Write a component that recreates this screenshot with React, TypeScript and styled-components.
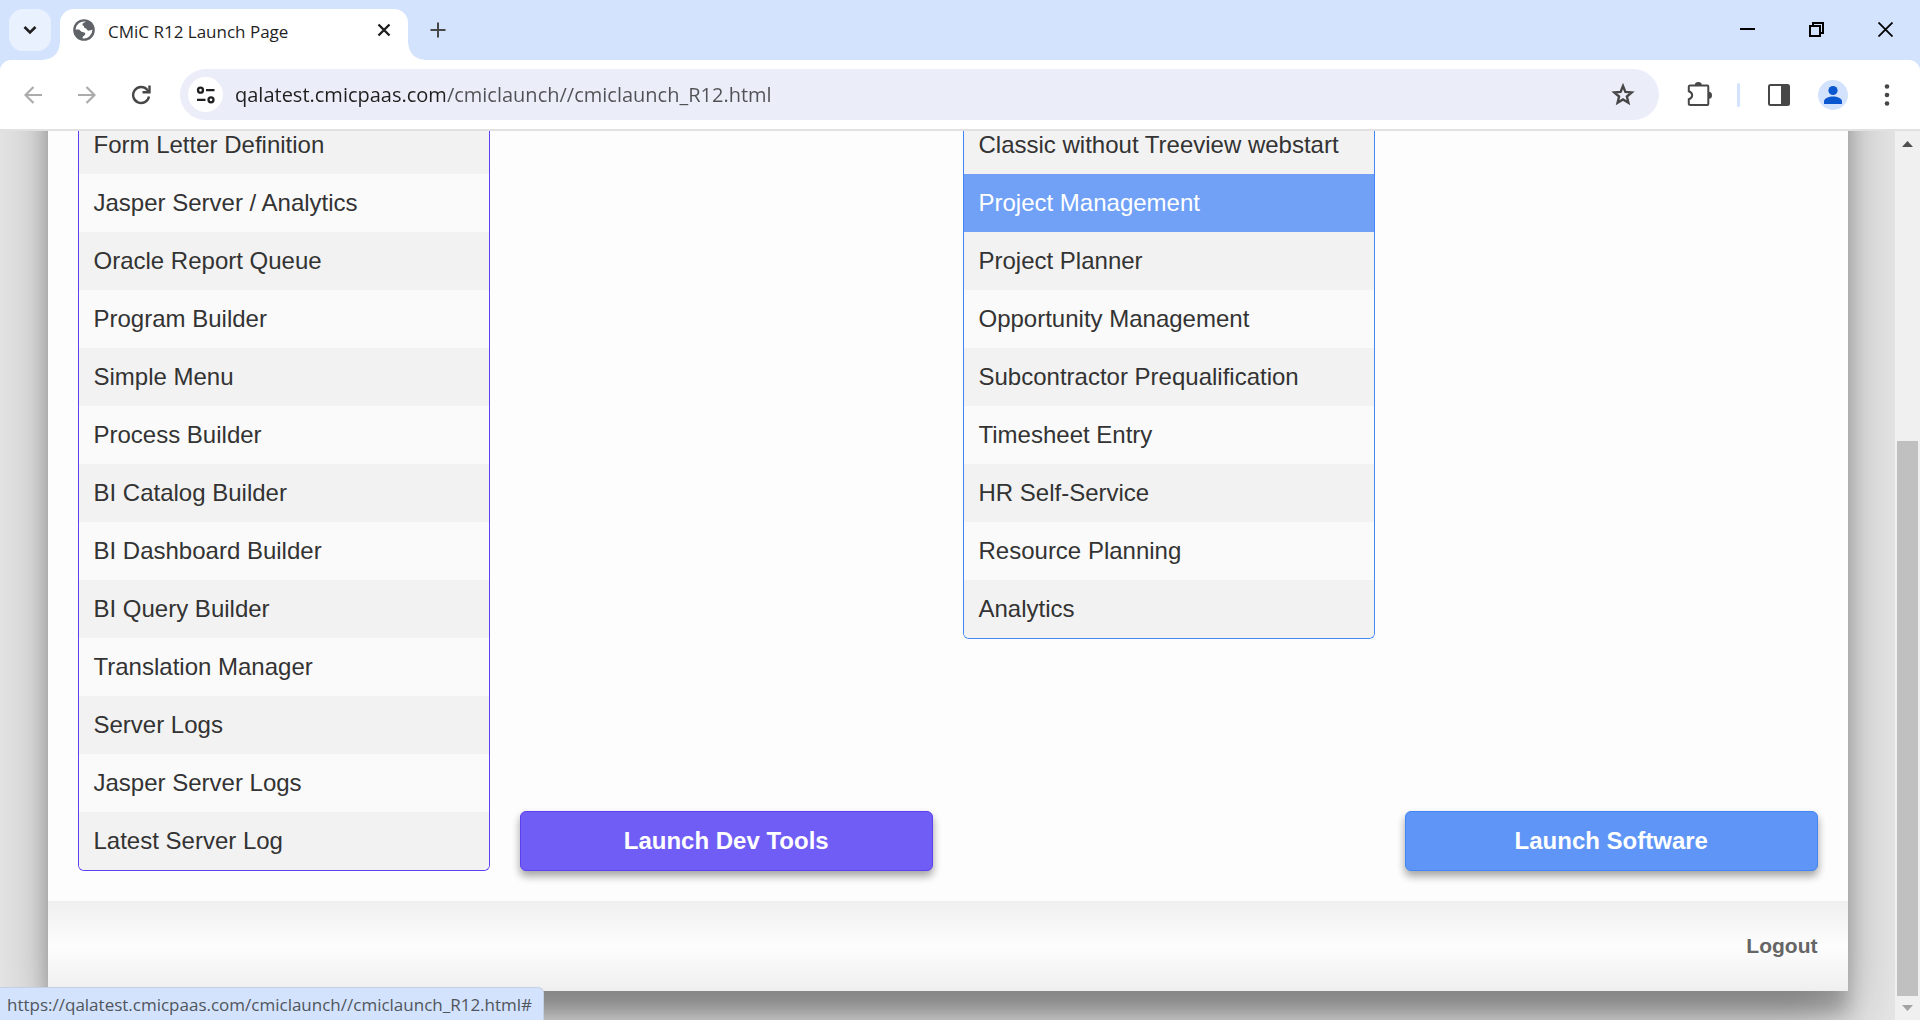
import React from "react";
import styled, { createGlobalStyle } from "styled-components";

const GlobalStyle = createGlobalStyle`
  *, *::before, *::after { box-sizing: border-box; }
  html, body { margin: 0; padding: 0; }
  body { overflow: hidden; }
  button { margin: 0; padding: 0; border: 0; background: none; cursor: pointer; }
`;

const uiFont = `"Segoe UI", "Open Sans", "Noto Sans", sans-serif`;
const pageFont = `Arial, "Liberation Sans", sans-serif`;

const Browser = styled.div`
  display: flex;
  flex-direction: column;
  height: 100vh;
  background: #d3e3fd;
  font-family: ${uiFont};
`;

/* ---------- tab strip ---------- */

const TabStrip = styled.header`
  display: flex;
  align-items: stretch;
  height: 60px;
  padding: 9px 0 0 9px;
  flex: none;
`;

const TabSearch = styled.button`
  display: grid;
  place-items: center;
  width: 42px;
  height: 42px;
  border-radius: 14px;
  background: #eaf1fe;
`;

const Tab = styled.div`
  position: relative;
  display: flex;
  align-items: center;
  width: 348px;
  margin-left: 9px;
  padding: 0 12px 9px 13px;
  border-radius: 14px 14px 0 0;
  background: #fff;

  &::before,
  &::after {
    content: "";
    position: absolute;
    bottom: 0;
    width: 16px;
    height: 16px;
  }
  &::before {
    right: 100%;
    background: radial-gradient(circle at 0 0, transparent 15px, #fff 16px);
  }
  &::after {
    left: 100%;
    background: radial-gradient(circle at 100% 0, transparent 15px, #fff 16px);
  }
`;

const TabTitle = styled.span`
  flex: 1;
  margin-left: 13px;
  padding-top: 4px;
  font-size: 17px;
  line-height: 24px;
  color: #1f1f1f;
  white-space: nowrap;
`;

const TabButton = styled.button`
  display: grid;
  place-items: center;
  width: 24px;
  height: 24px;
`;

const NewTab = styled.button`
  display: grid;
  place-items: center;
  width: 42px;
  height: 42px;
  margin-left: 9px;
`;

const WindowControls = styled.div`
  display: flex;
  margin: -9px 0 0 auto;
`;

const WindowButton = styled.button`
  display: grid;
  place-items: center;
  width: 69px;
  height: 58px;
`;

/* ---------- toolbar ---------- */

const Toolbar = styled.div`
  display: flex;
  align-items: center;
  flex: none;
  height: 71px;
  padding: 0 6px;
  border-bottom: 2px solid #e1e1e1;
  border-radius: 11px 11px 0 0;
  background: #fff;
`;

const ToolButton = styled.button`
  display: grid;
  place-items: center;
  flex: none;
  width: 54px;
  height: 51px;
`;

const Omnibox = styled.form`
  display: flex;
  align-items: center;
  flex: 1;
  height: 51px;
  margin-left: 12px;
  padding: 0 9px 0 8px;
  border-radius: 26px;
  background: #ebeef8;
`;

const SiteInfo = styled.button`
  display: grid;
  place-items: center;
  flex: none;
  width: 35px;
  height: 35px;
  border-radius: 50%;
  background: #fff;
`;

/* The host is darker than the path that follows it. */
const Address = styled.input`
  flex: 1;
  min-width: 0;
  height: 35px;
  margin-left: 12px;
  padding: 0;
  border: 0;
  outline: 0;
  font-family: ${uiFont};
  font-size: 20px;
  line-height: 35px;
  color: #1f1f1f;
  background: linear-gradient(90deg, #1f1f1f 210px, #505256 210px);
  background-clip: text;
  -webkit-background-clip: text;
  -webkit-text-fill-color: transparent;
`;

const StarButton = styled(ToolButton)`
  height: 42px;
`;

const ToolbarActions = styled.div`
  display: flex;
  align-items: center;
  margin-left: 14px;
`;

const Divider = styled.span`
  width: 3px;
  height: 24px;
  margin: 0 12px 0 10px;
  border-radius: 2px;
  background: #d3e3fd;
`;

/* ---------- page viewport ---------- */

const Viewport = styled.div`
  display: flex;
  flex: 1;
  min-height: 0;
  background: #e6e6e6;
`;

/* The document is scrolled to its end, so it hangs from the bottom edge. */
const Page = styled.main`
  display: flex;
  flex-direction: column;
  justify-content: flex-end;
  align-items: center;
  flex: 1;
  padding-bottom: 29px;
  overflow: hidden;
  font-family: ${pageFont};
`;

const Card = styled.div`
  flex: none;
  width: 95%;
  max-width: 1800px;
  padding-top: 180px;
  background: #fdfdfd;
  box-shadow: 0 28px 57px rgba(0, 0, 0, 0.3), 0 22px 18px rgba(0, 0, 0, 0.22);
`;

const Columns = styled.div`
  display: grid;
  grid-template-columns: repeat(4, 1fr);
  gap: 30px;
  padding: 0 30px 30px;
`;

const List = styled.ul<{ $line: string }>`
  align-self: start;
  margin: 0;
  padding: 0;
  overflow: hidden;
  list-style: none;
  border: 1px solid ${(p) => p.$line};
  border-top: 0;
  border-radius: 0 0 6px 6px;
`;

const Item = styled.li<{ $active?: boolean }>`
  background: ${(p) => (p.$active ? "#70a1f7" : "#fafafa")};

  &:nth-child(odd) {
    background: #f2f2f2;
  }
`;

const ItemLink = styled.a<{ $active?: boolean }>`
  display: block;
  padding: 15px;
  font-size: 24px;
  line-height: 28px;
  color: ${(p) => (p.$active ? "#fff" : "#333")};
  text-decoration: none;
`;

const LaunchButton = styled.button<{ $fill: string; $line: string }>`
  align-self: end;
  height: 60px;
  border: 1px solid ${(p) => p.$line};
  border-radius: 6px;
  background: ${(p) => p.$fill};
  box-shadow: 0 5px 9px rgba(0, 0, 0, 0.16), 0 5px 9px rgba(0, 0, 0, 0.23);
  font-family: ${pageFont};
  font-size: 24px;
  font-weight: 700;
  line-height: 28px;
  color: #fff;
`;

const Footer = styled.footer`
  display: flex;
  align-items: center;
  justify-content: flex-end;
  height: 90px;
  padding: 0 30px;
  background: linear-gradient(#efefef, #fdfdfd 50%, #efefef);
`;

const Logout = styled.a`
  font-size: 21px;
  font-weight: 700;
  line-height: 24px;
  color: #666;
  text-decoration: none;
`;

/* ---------- scrollbar and status ---------- */

const Scrollbar = styled.div`
  display: grid;
  grid-template-rows: 25px 285px 1fr 24px;
  justify-items: center;
  align-items: center;
  flex: none;
  width: 25px;
  background: #f0f0f0;
`;

const Thumb = styled.div`
  grid-row: 3;
  align-self: stretch;
  width: 21px;
  background: #c0c0c0;
`;

const Arrow = styled.svg<{ $row: number }>`
  grid-row: ${(p) => p.$row};
  display: block;
`;

const StatusBubble = styled.div`
  position: fixed;
  left: 0;
  bottom: 0;
  height: 33px;
  padding: 0 11px 0 7px;
  border-top: 1px solid #c4cfe2;
  border-right: 1px solid #c4cfe2;
  border-radius: 0 6px 0 0;
  background: #d3e3fd;
  font-size: 17px;
  line-height: 33px;
  color: #50555c;
  white-space: nowrap;
`;

const devTools = [
  "Form Letter Definition",
  "Jasper Server / Analytics",
  "Oracle Report Queue",
  "Program Builder",
  "Simple Menu",
  "Process Builder",
  "BI Catalog Builder",
  "BI Dashboard Builder",
  "BI Query Builder",
  "Translation Manager",
  "Server Logs",
  "Jasper Server Logs",
  "Latest Server Log",
];

const software = [
  "Classic without Treeview webstart",
  "Project Management",
  "Project Planner",
  "Opportunity Management",
  "Subcontractor Prequalification",
  "Timesheet Entry",
  "HR Self-Service",
  "Resource Planning",
  "Analytics",
];

type MenuProps = { items: string[]; line: string; active?: string };

function Menu({ items, line, active }: MenuProps) {
  return (
    <List $line={line}>
      {items.map((name) => (
        <Item key={name} $active={name === active}>
          <ItemLink href="#" $active={name === active}>
            {name}
          </ItemLink>
        </Item>
      ))}
    </List>
  );
}

function Globe() {
  return (
    <svg width="22" height="22" viewBox="0 0 22 22" aria-hidden="true">
      <circle cx="11" cy="11" r="10.8" fill="#5f6368" />
      <path
        d="M12.800 2.600c-1.200 1.100-3 1.300-3.300 2.700-.2 1 .5 1.700 1.500 1.800 0 1.200.2 1.900 1.500 2.200 1.200.3 1.300 1.400 2 2 1 .8 2.600.200 4.900-.5a8.600 8.600 0 0 1-9.700 8.600c-.3-1.200.2-2 1.300-2.600 1-.6 1.600-1.500 1-2.700-.7-1.200-2.400-.8-3.500-1.400-1.200-.7-1.500-2-2.900-2.200-1-.1-2 .1-3.100-.1A8.500 8.500 0 0 1 12.800 2.600z"
        fill="#fff"
      />
    </svg>
  );
}

export default function App() {
  return (
    <Browser>
      <GlobalStyle />
      <TabStrip>
        <TabSearch aria-label="Search tabs">
          <svg width="14" height="10" viewBox="0 0 14 10" fill="none" stroke="#1f1f1f" strokeWidth="2.600">
            <path d="M1.500 2 7 7.500 12.500 2" />
          </svg>
        </TabSearch>
        <Tab>
          <Globe />
          <TabTitle>CMiC R12 Launch Page</TabTitle>
          <TabButton aria-label="Close tab">
            <svg width="14" height="14" viewBox="0 0 14 14" fill="none" stroke="#1f1f1f" strokeWidth="2.400">
              <path d="M1.500 1.500l11 11M12.500 1.500l-11 11" />
            </svg>
          </TabButton>
        </Tab>
        <NewTab aria-label="New tab">
          <svg width="16" height="16" viewBox="0 0 16 16" fill="none" stroke="#474747" strokeWidth="2">
            <path d="M8 .5v15M.5 8h15" />
          </svg>
        </NewTab>
        <WindowControls>
          <WindowButton aria-label="Minimize">
            <svg width="15" height="15" viewBox="0 0 15 15" fill="#000">
              <path d="M0 6h15v2H0z" />
            </svg>
          </WindowButton>
          <WindowButton aria-label="Restore">
            <svg width="15" height="15" viewBox="0 0 15 15" fill="none" stroke="#000" strokeWidth="2">
              <path d="M1 4h10v10H1zM4 4V1h10v10h-3" />
            </svg>
          </WindowButton>
          <WindowButton aria-label="Close">
            <svg width="15" height="15" viewBox="0 0 15 15" fill="none" stroke="#000" strokeWidth="1.800">
              <path d="M.5.500l14 14M14.500.500l-14 14" />
            </svg>
          </WindowButton>
        </WindowControls>
      </TabStrip>

      <Toolbar>
        <ToolButton aria-label="Back">
          <svg width="18" height="18" viewBox="0 0 18 18" fill="none" stroke="#ababab" strokeWidth="2.200">
            <path d="M18 9H2M9.500 1 1.500 9l8 8" />
          </svg>
        </ToolButton>
        <ToolButton aria-label="Forward">
          <svg width="18" height="18" viewBox="0 0 18 18" fill="none" stroke="#ababab" strokeWidth="2.200">
            <path d="M0 9h16M8.500 1l8 8-8 8" />
          </svg>
        </ToolButton>
        <ToolButton aria-label="Reload">
          <svg width="20" height="20" viewBox="0 0 20 20" fill="none" stroke="#474747" strokeWidth="2.400">
            <path d="M18 11.500A8 8 0 1 1 16.200 4.800L17.500 6.200" />
            <path d="M18.500.5V7.300H11.500" />
          </svg>
        </ToolButton>
        <Omnibox onSubmit={(e) => e.preventDefault()}>
          <SiteInfo type="button" aria-label="View site information">
            <svg width="20" height="18" viewBox="0 0 20 18" fill="none" stroke="#1f1f1f" strokeWidth="2.300">
              <circle cx="4.500" cy="4.200" r="2.500" />
              <path d="M10 4.200h8.500M1 13.800h8.500" />
              <circle cx="15" cy="13.800" r="2.500" />
            </svg>
          </SiteInfo>
          <Address
            type="text"
            aria-label="Address and search bar"
            spellCheck={false}
            defaultValue="qalatest.cmicpaas.com/cmiclaunch//cmiclaunch_R12.html"
          />
          <StarButton type="button" aria-label="Bookmark this tab">
            <svg width="24" height="24" viewBox="0 0 24 24" fill="none" stroke="#474747" strokeWidth="2.400">
              <path d="M12 3l2.400 5.900 6.300.5-4.800 4.100 1.500 6.300L12 16.500l-5.400 3.300 1.500-6.300-4.800-4.100 6.300-.5z" />
            </svg>
          </StarButton>
        </Omnibox>
        <ToolbarActions>
          <ToolButton aria-label="Extensions">
            <svg width="26" height="26" viewBox="0 0 26 26" fill="none" stroke="#474747" strokeWidth="2">
              <path d="M3.200 3.500h17.100q1 0 1 1v17.500q0 1-1 1H3.200q-1.400 0-1.400-1v-4.700c4.500-1.500 4.500-6.500 0-8V4.500q0-1 1.400-1z" />
              <path d="M7.800 3.200a3.500 3.200 0 0 1 7 0zM21.800 9.700a3.200 3.500 0 0 1 0 7z" fill="#474747" stroke="none" />
            </svg>
          </ToolButton>
          <Divider />
          <ToolButton aria-label="Side panel">
            <svg width="22" height="22" viewBox="0 0 22 22">
              <rect x="1" y="1" width="20" height="20" rx="1.500" fill="none" stroke="#474747" strokeWidth="2" />
              <path d="M13 1h8v20h-8z" fill="#474747" />
            </svg>
          </ToolButton>
          <ToolButton aria-label="Profile">
            <svg width="30" height="30" viewBox="0 0 30 30">
              <circle cx="15" cy="15" r="15" fill="#d3e3fd" />
              <circle cx="15" cy="10.500" r="4.600" fill="#0b57d0" />
              <path d="M6 24v-2.500c0-3.200 5-5 9-5s9 1.800 9 5V24z" fill="#0b57d0" />
            </svg>
          </ToolButton>
          <ToolButton aria-label="Menu">
            <svg width="6" height="22" viewBox="0 0 6 22" fill="#474747">
              <circle cx="3" cy="2.500" r="2.300" />
              <circle cx="3" cy="11" r="2.300" />
              <circle cx="3" cy="19.500" r="2.300" />
            </svg>
          </ToolButton>
        </ToolbarActions>
      </Toolbar>

      <Viewport>
        <Page>
          <Card>
            <Columns>
              <Menu items={devTools} line="#5b3ff0" />
              <LaunchButton $fill="#705df5" $line="#5b3ff0">
                Launch Dev Tools
              </LaunchButton>
              <Menu items={software} line="#4285f4" active="Project Management" />
              <LaunchButton $fill="#5e95f6" $line="#4285f4">
                Launch Software
              </LaunchButton>
            </Columns>
            <Footer>
              <Logout href="#">Logout</Logout>
            </Footer>
          </Card>
        </Page>
        <Scrollbar aria-hidden="true">
          <Arrow $row={1} width="11" height="6" viewBox="0 0 11 6" fill="#505050">
            <path d="M0 6 5.500 0 11 6z" />
          </Arrow>
          <Thumb />
          <Arrow $row={4} width="11" height="6" viewBox="0 0 11 6" fill="#a3a3a3">
            <path d="M0 0h11L5.500 6z" />
          </Arrow>
        </Scrollbar>
      </Viewport>

      <StatusBubble role="status">
        https://qalatest.cmicpaas.com/cmiclaunch//cmiclaunch_R12.html#
      </StatusBubble>
    </Browser>
  );
}
